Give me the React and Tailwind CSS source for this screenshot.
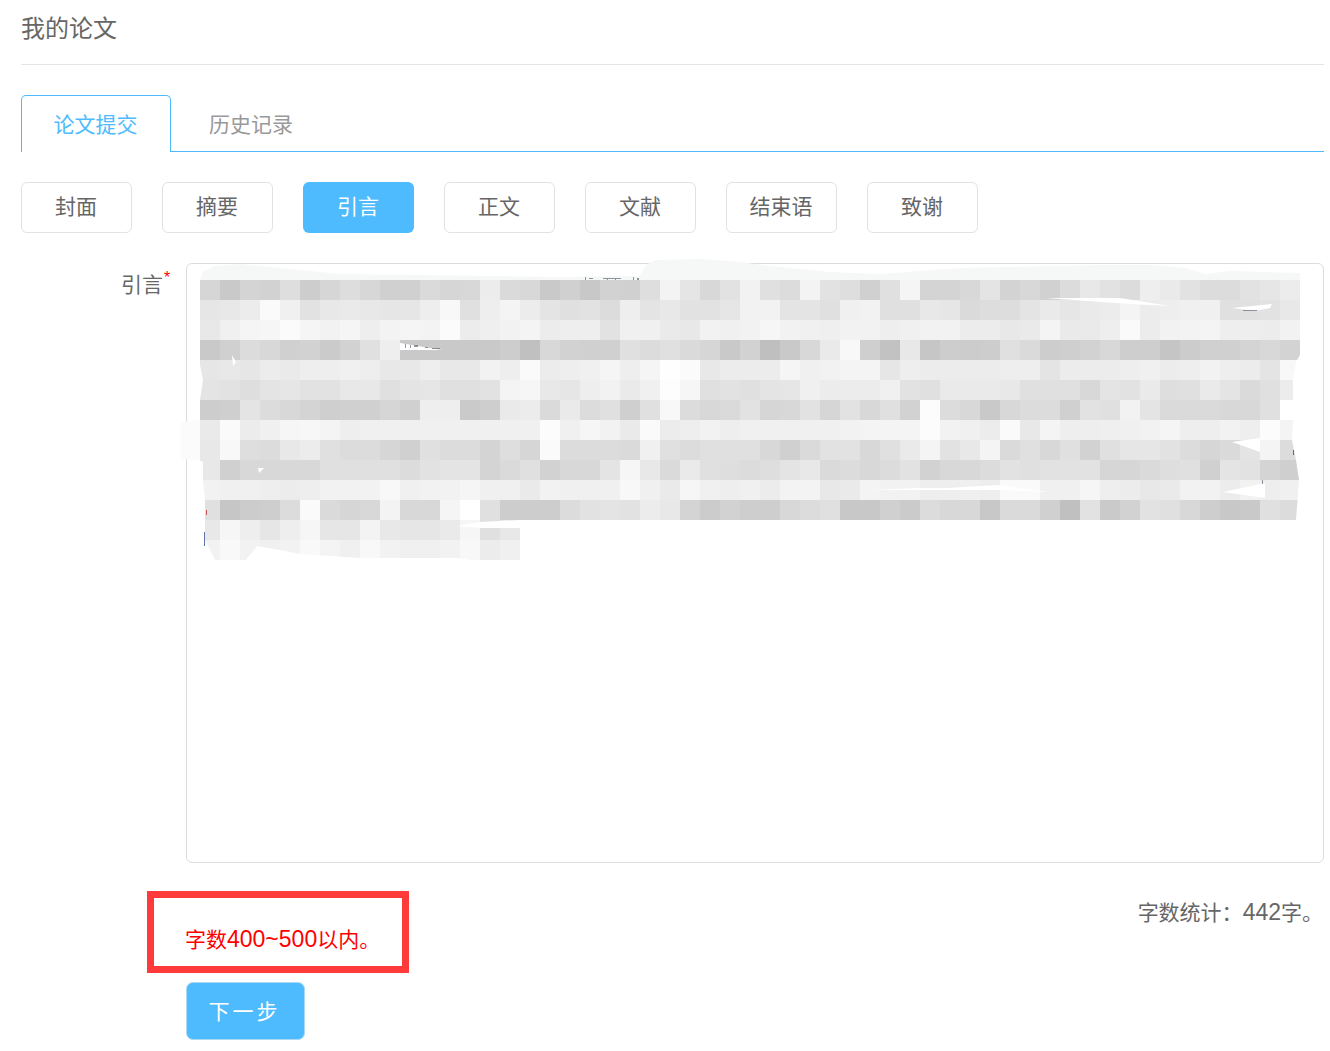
const FONT = "font-['Noto_Sans_CJK_SC','Noto_Sans',sans-serif]";
const LATIN = "font-['Liberation_Sans',sans-serif] text-[23px]";

const steps = ["封面", "摘要", "引言", "正文", "文献", "结束语", "致谢"];

// gray levels of the blurred text block, one string per 20px row
const mosaic = [
  "d6 c9 d4 d2 de cd d6 dd d7 d0 d0 da d6 d8 ec da d8 c9 d0 c8 d2 d0 de f3 e5 d8 e2 f2 e0 dc f3 e2 de d0 e0 f5 d4 d4 d8 e4 d3 d8 d1 dc e8 e2 dc ee ea e2 dc dc e2 e6 ec",
  "e6 e8 ec fa f0 e2 e8 ea e8 e6 e6 ee f8 e0 ee f4 ec e4 e0 e2 dc ee e4 e8 e2 e2 e6 f2 f2 e4 e4 e0 f0 f2 e0 e0 e8 e6 da dd dd e4 ea e6 ea ec f4 ec ee f0 f0 e0 e0 e2 e8",
  "e8 f0 f5 f6 fb f5 f2 f5 ee f3 f5 f3 fb ec ef f2 f4 ec ee ee e2 f0 f0 ea e8 f2 f0 f2 f6 f2 f0 ef f2 f2 ee f0 f2 f2 ec ec e8 ea f4 ea ea ee fa ec f2 f3 f4 ee ee ec f2",
  "c9 d0 dc d8 d0 d2 cb d2 e0 ee c9 c9 c9 c9 c9 cd c0 d8 d2 d0 d0 e0 dc e0 da d6 c9 d2 bf c9 d8 ea f8 cf c2 e8 c6 cd cc cd e0 da cd cf d2 d8 ce ce c5 cc d0 d0 d4 d8 d3",
  "e6 e8 e6 ec ea ee ee f0 ee e8 e8 ee e8 e8 f2 ee fa ec ee f0 f5 ee f5 fe fb e8 ec ec ec f5 f0 f2 f4 f4 e6 ee ec ec ec ec ee ee e4 ec ec ec ee f0 ec ee f2 ee ec e4 f8",
  "e4 e2 de e4 e6 e2 e2 e8 e8 e0 e4 e6 e0 e0 e2 f4 f6 e8 e6 ee f2 ea f0 fd f6 e0 e2 e0 e4 e6 f0 ec ec ec f0 e2 e0 ea ea ea e8 e0 e0 e0 d8 e4 e2 ea de e0 ea e4 da e0 ec",
  "cd cf e4 dc d8 d4 cf d0 d0 d6 d0 ee ee ca ce ea ec da ea dc e0 cf e0 f8 dc d8 da e2 d6 d8 e2 d6 e2 d8 e0 d2 fc dc d8 c9 d8 dc dc d0 e2 e0 f2 e4 da da da d8 d8 e0 fe",
  "ea fa ec f0 f6 f7 f4 ee f0 f0 f0 f0 f0 f0 f0 f0 f0 fc f0 f6 f2 ea fa ec ee f2 ee f0 f0 f0 f0 f0 f2 f4 f4 f4 fc f2 f0 ec fa e8 f4 ee ee ef f0 f2 f5 ee ee f2 ee fc f4",
  "e8 f8 de dc e8 ec e0 dc dc d6 d0 e0 dc dc d4 de d6 fa dc dc dc da f0 e0 dc e0 e0 e0 d8 d0 da e2 e2 d8 e0 ea f4 e2 e8 f4 da e0 d8 e0 d2 e0 e6 e6 e2 dc d6 da e4 f4 dc",
  "e8 d0 d8 d8 d8 d8 e0 e0 e0 e0 dc e2 e4 e4 d4 da e0 d2 d8 d8 e4 f6 e8 da ea e0 de dc de e4 e8 da dc d8 dc e2 d2 d8 d8 dc e2 e0 e2 e2 e2 d6 d6 da de e0 d0 e4 e2 d4 cf",
  "f2 f0 f0 ee ec ee f2 f2 f2 f8 f0 f2 f2 f5 f0 f0 ea f2 f0 f0 f0 f8 f0 ea f6 f0 ee f0 ec f3 f3 e8 ea f4 f2 f2 ee ee f0 ee fa fa f0 f0 f6 ee ec e8 ea f2 f2 ec f2 ee f0",
  "e0 c6 cc ce dc fa da d6 d8 f3 d8 d8 f5 ff e0 cd cd cd dc e2 e4 e2 ec e8 d4 cc d2 ce ce d8 dc e0 c8 c8 d0 cb dc d8 d8 c8 da da d0 c0 e2 ca d2 e2 e0 d8 ce c8 c9 e0 dc",
  "e8 f6 ee e6 ee f6 e6 e6 f3 e8 e6 e6 ea f6 e0 e8",
  "f2 f9 f2 f0 f2 f9 f4 f0 f8 f2 f0 f0 f2 f8 ec f0",
].map((row) => row.split(" "));

function Mosaic() {
  return (
    <div className="flex flex-col">
      {mosaic.map((row, r) => (
        <div key={r} className="flex">
          {row.map((g, c) => (
            <div
              key={c}
              className="w-5 h-5"
              style={{ backgroundColor: `#${g}${g}${g}` }}
            />
          ))}
        </div>
      ))}
    </div>
  );
}

// torn edges of the blur, page coordinates
function BlurEdges() {
  return (
    <svg
      className="absolute -inset-px overflow-visible pointer-events-none"
      width="1138"
      height="600"
      viewBox="186 263 1138 600"
    >
      <polygon
        fill="#f6f7f7"
        points="200,280 203,272 215,266 240,264 280,268 340,274 560,277 640,276 646,265 655,260 700,259 740,262 770,266 830,272 880,274 960,268 1100,265 1150,265 1185,268 1205,274 1230,271 1300,273 1300,280"
      />
      <polygon fill="#fbfbfb" points="200,420 181,422 181,459 200,460" />
      {/* white tears */}
      <polygon fill="#fff" points="1300,355 1296,362 1293,380 1293,400 1280,400 1280,420 1293,420 1292,440 1296,460 1299,480 1296,520 1301,520 1301,355" />
      <polygon fill="#fff" points="199,360 203,380 200,400 199,400" />
      <polygon fill="#fff" points="199,460 203,462 203,480 205,500 205,540 215,560 199,560" />
      <polygon fill="#fff" points="245,561 257,546 280,550 300,554 360,558 457,558 480,561" />
      <polygon fill="#fff" points="457,526 480,522 521,520 521,528 480,528" />
      <polygon fill="#fff" points="1045,298 1120,298 1170,306 1130,304" />
      <polygon fill="#fff" points="1232,308 1272,304 1270,308 1255,311" />
      <polygon fill="#fff" points="1232,442 1260,438 1260,452" />
      <polygon fill="#fff" points="930,489 1000,485 1047,492 1000,490" />
      <polygon fill="#fff" points="870,490 920,488 1030,490" />
      <polygon fill="#fff" points="1223,492 1265,483 1265,498" />
      <polygon fill="#fff" points="232,355 236,362 233,366" />
      <polygon fill="#fff" points="400,343 442,350 400,350" />
      <polygon fill="#fff" points="258,468 264,468 259,473" />
      {/* leftover bits of the text under the blur */}
      <g fill="#6b7280" opacity="0.75">
        <rect x="585" y="277" width="1" height="3" />
        <rect x="589" y="278" width="4" height="1" />
        <rect x="603" y="278" width="18" height="1" />
        <rect x="607" y="278" width="1" height="2" />
        <rect x="615" y="278" width="1" height="2" />
        <rect x="633" y="277" width="1" height="3" />
        <rect x="637" y="278" width="2" height="2" />
        <rect x="405" y="344" width="1" height="4" />
        <rect x="410" y="345" width="1" height="3" />
        <rect x="414" y="345" width="4" height="2" />
        <rect x="425" y="347" width="3" height="1" />
        <rect x="432" y="348" width="8" height="1" />
        <rect x="1243" y="310" width="14" height="1" />
        <rect x="1262" y="480" width="1" height="4" />
      </g>
      <g fill="#b91c1c" opacity="0.7">
        <rect x="206" y="510" width="1" height="5" />
      </g>
      <g fill="#1e3a8a" opacity="0.7">
        <rect x="204" y="532" width="1" height="14" />
        <rect x="1293" y="450" width="1" height="5" />
      </g>
    </svg>
  );
}

export default function App() {
  return (
    <div className={`${FONT} bg-white pl-[21px] pr-[6px] h-[1051px] overflow-hidden text-[#666] text-[21px]`}>
      <div className="h-[65px] border-b border-[#e5e5e5] text-2xl leading-[54px]">
        我的论文
      </div>

      <div className="mt-[30px] h-[57px] flex border-b border-[#4dbbfb]">
        <div className="w-[150px] h-[57px] pr-px bg-white border border-b-0 border-[#4dbbfb] rounded-t-[5px] text-[#4dbbfd] text-center leading-[54px]">
          论文提交
        </div>
        <div className="ml-[38px] text-[#999] leading-[56px]">历史记录</div>
      </div>

      <div className="mt-[30px] flex gap-[30px]">
        {steps.map((s) => (
          <div
            key={s}
            className={
              s === "引言"
                ? "w-[111px] h-[51px] pb-1 pr-px rounded-[6px] bg-[#4dbbfd] text-white flex items-center justify-center"
                : "w-[111px] h-[51px] pb-1 pr-px rounded-[6px] border border-[#e2e2e2] flex items-center justify-center"
            }
          >
            {s}
          </div>
        ))}
      </div>

      <div className="mt-[30px] flex">
        <div className="w-[165px] shrink-0 pl-[100px] pt-[4px] leading-[32px] flex items-start">
          引言
          <span className="text-[#f00] font-['Liberation_Sans',sans-serif] text-base leading-none mt-[3px] ml-px">*</span>
        </div>
        <div className="relative flex-1 h-[600px] border border-[#dcdcdc] rounded-[6px] pl-[13px] pt-[16px]">
          <Mosaic />
          <BlurEdges />
        </div>
      </div>

      <div className="mt-[28px] flex justify-between">
        <div className="ml-[126px] w-[262px] h-[82px] border-[7px] border-[#ff3a3a] pl-[31px] pt-[24px] text-[#f00] leading-[32px]">
          字数<span className={LATIN}>400~500</span>以内。
        </div>
        <div className="pr-px pt-[4px] leading-[32px]">
          字数统计：<span className={LATIN}>442</span>字。
        </div>
      </div>

      <div className="mt-[9px] ml-[165px] w-[119px] h-[58px] pb-px pr-[2px] rounded-[7px] bg-[#4dbbfd] border border-[#a9d9f5] text-white flex items-center justify-center tracking-[3px]">
        下一步
      </div>
    </div>
  );
}
